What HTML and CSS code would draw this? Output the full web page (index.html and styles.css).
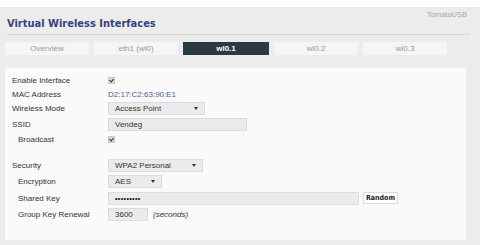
FILE: index.html
```html
<!DOCTYPE html>
<html lang="en">
<head>
  <meta charset="UTF-8" />
  <title>Virtual Wireless Interfaces</title>
  <link rel="stylesheet" href="styles.css">
</head>
<body>
  <div class="page">
    <div class="brand">TomatoUSB</div>
    <h1 class="title">Virtual Wireless Interfaces</h1>

    <div class="tabs">
      <div class="tab">Overview</div>
      <div class="tab">eth1 (wl0)</div>
      <div class="tab active">wl0.1</div>
      <div class="tab">wl0.2</div>
      <div class="tab">wl0.3</div>
    </div>

    <div class="panel">
      <div class="row r14">
        <div class="label">Enable Interface</div>
        <div class="value"><span class="check"></span></div>
      </div>
      <div class="row r14">
        <div class="label">MAC Address</div>
        <div class="value mac">D2:17:C2:63:90:E1</div>
      </div>
      <div class="row r15">
        <div class="label">Wireless Mode</div>
        <div class="value"><div class="select w97">Access Point</div></div>
      </div>
      <div class="row r16">
        <div class="label">SSID</div>
        <div class="value"><div class="field w139">Vendeg</div></div>
      </div>
      <div class="row r15">
        <div class="label sub">Broadcast</div>
        <div class="value"><span class="check"></span></div>
      </div>

      <div class="spacer"></div>

      <div class="row r15">
        <div class="label">Security</div>
        <div class="value"><div class="select w95">WPA2 Personal</div></div>
      </div>
      <div class="row r17">
        <div class="label sub">Encryption</div>
        <div class="value"><div class="select w54">AES</div></div>
      </div>
      <div class="row r16">
        <div class="label sub">Shared Key</div>
        <div class="value">
          <div class="field w251 dots">&bull;&bull;&bull;&bull;&bull;&bull;&bull;&bull;&bull;</div>
          <button class="btn">Random</button>
        </div>
      </div>
      <div class="row r16">
        <div class="label sub">Group Key Renewal</div>
        <div class="value">
          <div class="field w40">3600</div>
          <span class="hint">(seconds)</span>
        </div>
      </div>
    </div>
  </div>
</body>
</html>
```

FILE: styles.css
```css
body {
  margin: 0;
  background: #fff;
  font-family: "Liberation Sans", Arial, sans-serif;
  font-size: 8px;
  color: #333;
}

.page {
  margin-top: 7px;
  height: 238px;
  background: #ececec;
  padding: 0 0 0 5px;
  box-sizing: border-box;
}

.brand {
  text-align: right;
  width: 462px;
  padding-top: 4px;
  height: 6px;
  line-height: 8px;
  font-size: 7.5px;
  color: #a8a8a8;
}

.title {
  margin: 0 0 0 2px;
  width: 463px;
  font-family: "DejaVu Sans Condensed", "DejaVu Sans", sans-serif;
  font-size: 11px;
  font-weight: bold;
  color: #35457a;
  line-height: 14px;
  padding: 0 0 3px;
  border-bottom: 1px solid #d6d6d6;
}

.tabs {
  display: flex;
  gap: 5px;
  margin-top: 7px;
}

.tab {
  width: 84px;
  height: 13px;
  line-height: 13px;
  text-align: center;
  background: #f5f5f5;
  color: #9a9a9a;
}

.tab.active {
  background: #2b3a40;
  color: #fff;
  font-weight: bold;
  width: 86px;
}

.panel {
  margin-top: 13px;
  width: 461px;
  height: 172px;
  background: #fafafa;
  padding: 5px 0 0 7px;
  box-sizing: border-box;
}

.row {
  display: flex;
  align-items: center;
}

.r14 { height: 14px; }
.r15 { height: 15px; }
.r16 { height: 16px; }
.r17 { height: 17px; }

.spacer { height: 11px; }

.label {
  width: 96px;
  flex: none;
}

.label.sub {
  padding-left: 6px;
  width: 90px;
}

.value {
  display: flex;
  align-items: center;
  gap: 4px;
}

.mac {
  color: #4a5f8c;
}

.check {
  width: 7px;
  height: 7px;
  background: #d9d9d9;
  border: 1px solid #c8c8c8;
  box-sizing: border-box;
  position: relative;
}

.check::after {
  content: "";
  position: absolute;
  left: 1px;
  top: 0;
  width: 2px;
  height: 3px;
  border-right: 1px solid #333;
  border-bottom: 1px solid #333;
  transform: rotate(40deg);
}

.select,
.field {
  height: 13px;
  line-height: 11px;
  box-sizing: border-box;
  border: 1px solid #dcdcdc;
  background: #ebebeb;
  padding: 0 6px;
  color: #333;
}

.select {
  position: relative;
}

.select::after {
  content: "";
  position: absolute;
  right: 6px;
  top: 4px;
  border-left: 2px solid transparent;
  border-right: 2px solid transparent;
  border-top: 3px solid #333;
}

.w97 { width: 97px; }
.w95 { width: 95px; }
.w54 { width: 54px; }
.w139 { width: 139px; }
.w251 { width: 251px; }
.w40 { width: 40px; }

.dots {
  font-size: 7px;
  font-weight: bold;
  color: #111;
  letter-spacing: 0.4px;
}

.btn {
  height: 12px;
  padding: 0 2px;
  font-family: "DejaVu Sans Condensed", "DejaVu Sans", sans-serif;
  font-size: 7px;
  font-weight: bold;
  line-height: 10px;
  background: #fff;
  border: 1px solid #dcdcdc;
  color: #222;
}

.hint {
  font-style: italic;
  margin-left: 1px;
}
```
